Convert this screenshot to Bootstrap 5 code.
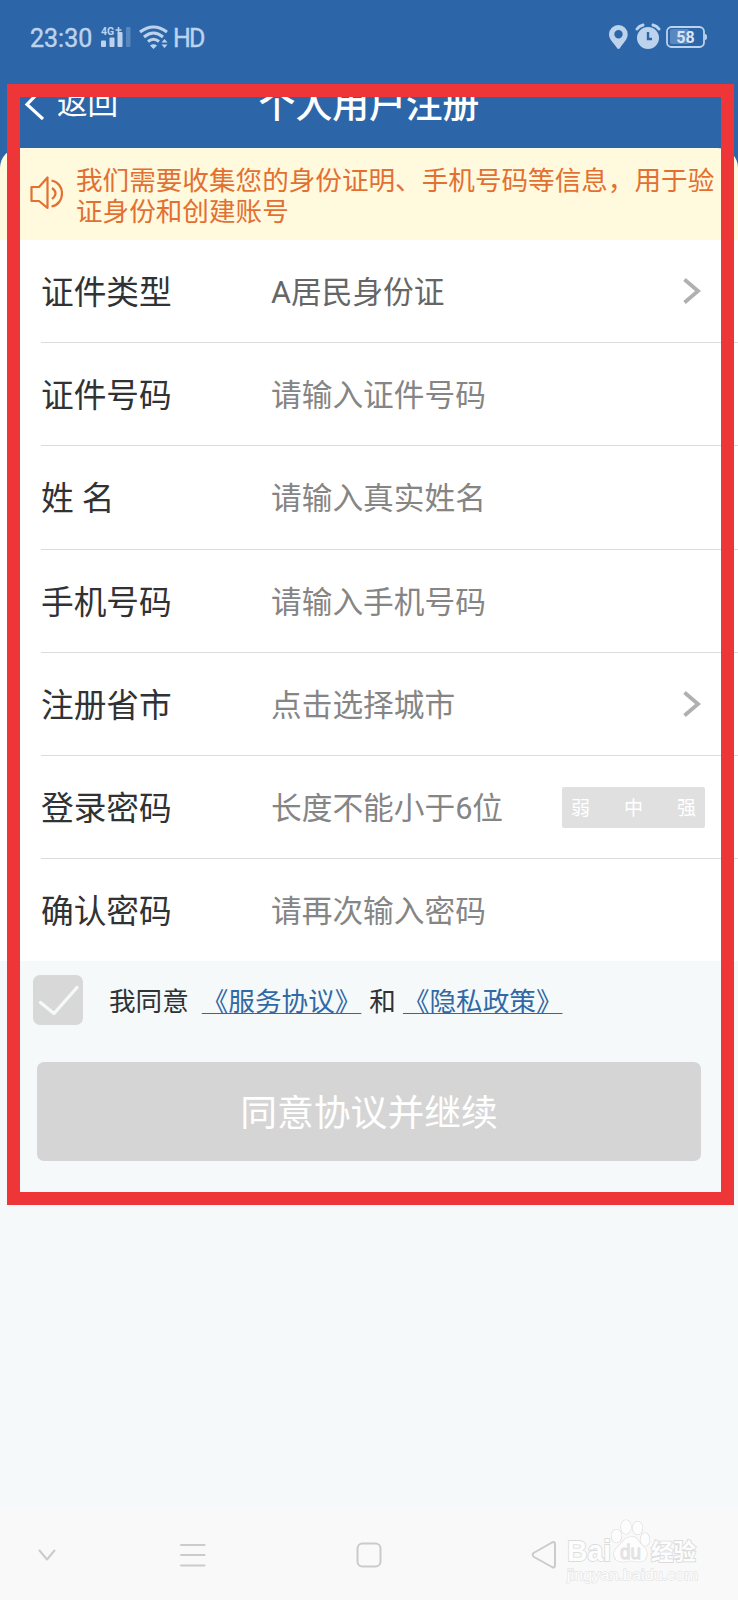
<!DOCTYPE html>
<html lang="zh-CN">
<head>
<meta charset="utf-8">
<meta name="viewport" content="width=device-width, initial-scale=1">
<title>个人用户注册</title>
<link href="https://cdn.jsdelivr.net/npm/bootstrap@5.3.0/dist/css/bootstrap.min.css" rel="stylesheet">
<style>
body{font-family:Roboto,"Noto Sans CJK SC",sans-serif;background:#f5f9fa;color:#303234;width:738px;height:1600px;overflow:hidden}
.screen{height:1600px}
.top-area{background:#2c66a9}
.status{height:74px;padding:0 30px 0 30px;color:#bdd3ed;font-size:25px;line-height:74px}
.status span{padding-top:3px}
.status-time{width:62px;-webkit-text-stroke:.4px #bdd3ed}
.status-signal{margin-left:8px}
.status-wifi{margin-left:7px}
.status-hd{margin-left:4px;-webkit-text-stroke:.4px #bdd3ed;letter-spacing:-1.8px}
.title-bar{height:74px;color:#fff}
.back-link{position:absolute;left:24px;top:7px;font-size:30.6px;line-height:46px;color:#fff}
.page-title{font-size:36.8px;line-height:56px;font-weight:500;padding-top:4px;margin:0}
.notice{height:92px;background:#fff9dd;border-radius:20px 20px 0 0;color:#e27033;font-size:26.6px;line-height:31.4px;padding:17px 0 0 30px;white-space:nowrap}
.notice-text{margin-left:13px}
.form-rows{height:721px;background:#fff;padding-left:41px}
.form-line{height:103.2px;border-bottom:1px solid #dcdcdc;padding-right:37px}
.form-line:last-child{border-bottom:0;height:101.8px}
.form-line label{width:230px;font-size:32.7px;padding-top:5px}
.form-line input{border:0;outline:0;background:none;padding:3px 0 0;width:286px;height:60px;font-size:30.7px;color:#666}
.form-line .filled-value{padding-top:0;margin-top:-3px}
.form-line input::placeholder{color:#858585;opacity:1}
.strength{width:143px;height:41px;background:#e0e0e0;border-radius:2px;color:#fff;font-size:19px;padding:4px 9px 0;margin-right:-4px}
.agree{height:101px;padding:14px 0 0 33px;font-size:26.6px}
.agree-box{width:50px;height:50px;border-radius:7px;background:#d8d8d8}
.agree-text{line-height:53px;margin-left:26px}
.agree-service{margin-left:13px}
.agree-and{margin-left:8px}
.agree-privacy{margin-left:7px}
.agree-text a{color:#3069a5;text-decoration:underline;text-decoration-thickness:1px;text-underline-offset:2px;text-decoration-skip-ink:none}
.go-btn{width:664px;height:99px;margin-left:37px;border:0;border-radius:7px;font-size:36.8px;line-height:99px}
.go-btn:disabled{background:#d5d5d5;color:#fff;opacity:1}
.go-btn span{display:block;padding-top:2px}
.highlight-frame{position:absolute;left:7px;top:84px;width:727px;height:1121px;border:13px solid #ee3638;pointer-events:none}
.sys-nav{height:91px;background:#f9f9f9}
.watermark{position:absolute;left:560px;top:1514px}
</style>
</head>
<body>
<main class="screen position-relative d-flex flex-column">
  <header class="top-area">
    <div class="status d-flex align-items-center">
      <span class="status-time">23:30</span>
      <svg class="status-signal" width="32" height="28" viewBox="0 0 32 28" fill="#bdd3ed"><text x="1" y="12" font-size="10.500" font-weight="700" font-family="Roboto">4G</text><path d="M18.500 4v7M15.500 7h6" stroke="#bdd3ed" stroke-width="1.600"/><rect x="1" y="17.500" width="5" height="6.500" rx="1"/><rect x="9.500" y="14.500" width="5" height="9.500" rx="1"/><rect x="17.500" y="9" width="5" height="15" rx="1"/><rect x="26" y="4" width="4.500" height="20" rx="1" opacity=".3"/></svg>
      <svg class="status-wifi" width="30" height="24" viewBox="0 0 30 24" fill="none" stroke="#bdd3ed" stroke-width="3"><path d="M1 7Q14.500-3 28 7M5 12Q14.500 4 24 12M9 16.500Q14.500 12 20 16.500"/><path d="M11 20.500Q14.500 18 18 20.500L14.500 24ZM22.500 17.500L25.500 14l3 3.500zM22.500 19.500L25.500 23l3-3.500z" fill="#bdd3ed" stroke="none"/></svg>
      <span class="status-hd">HD</span>
      <svg class="ms-auto" width="99" height="28" viewBox="0 0 99 28"><path fill-rule="evenodd" fill="#bdd3ed" d="M9.500 2A9.300 9.300 0 0 0 0 11.300C0 17 5 20 8 25q1.500 2 3 0C14 20 18.700 17 18.700 11.300A9.300 9.300 0 0 0 9.500 2Zm0 5a4.200 4.200 0 1 1 0 8.400a4.200 4.200 0 0 1 0-8.400Z"/><circle cx="39" cy="15" r="11" fill="#bdd3ed"/><path d="M39 9v7h4" fill="none" stroke="#2c66a9" stroke-width="2.400"/><path d="M28 6q2-3 6-4M50 6q-2-3-6-4" fill="none" stroke="#bdd3ed" stroke-width="3" stroke-linecap="round"/><rect x="61" y="6" width="19" height="15" rx="2" fill="#5988c1"/><rect x="58" y="4" width="37" height="20" rx="4.500" fill="none" stroke="#bdd3ed" stroke-width="1.800"/><path d="M96 11q2 0 2 3t-2 3z" fill="#bdd3ed"/><text x="76.500" y="19.700" font-family="Roboto" font-size="16" font-weight="700" fill="#d6e5f6" text-anchor="middle">58</text></svg>
    </div>
    <div class="title-bar position-relative text-center">
      <a class="back-link text-decoration-none d-flex align-items-center" href="#"><svg width="20" height="32" viewBox="0 0 20 32"><path d="M18 1L3 16.500L19 31" fill="none" stroke="#fff" stroke-width="3.200"/></svg><span style="margin-left:13px">返回</span></a>
      <h1 class="page-title">个人用户注册</h1>
    </div>
  </header>
  <div class="top-area"><div class="notice d-flex">
    <svg style="margin-top:10px" width="33" height="36" viewBox="0 0 33 36" fill="none" stroke="#e27033" stroke-width="2.200" stroke-linejoin="round"><path d="M1.500 12H9L17.500 2.500V33L9 26H1.500ZM22 13Q29 18 22 24M21.500 5.500C35.500 8 35.500 29 21.500 31.500"/></svg>
    <div class="notice-text">我们需要收集您的身份证明、手机号码等信息，用于验<br>证身份和创建账号</div>
  </div></div>
  <form class="form-rows">
    <div class="form-line d-flex align-items-center"><label>证件类型</label><input class="filled-value" value="A居民身份证"><svg class="ms-auto" width="18" height="28" viewBox="0 0 18 28"><path d="M1.500 2.500L15 14L1.500 25.500" fill="none" stroke="#b0b0b0" stroke-width="3.800"/></svg></div>
    <div class="form-line d-flex align-items-center"><label>证件号码</label><input placeholder="请输入证件号码"></div>
    <div class="form-line d-flex align-items-center"><label>姓 名</label><input placeholder="请输入真实姓名"></div>
    <div class="form-line d-flex align-items-center"><label>手机号码</label><input placeholder="请输入手机号码"></div>
    <div class="form-line d-flex align-items-center"><label>注册省市</label><input placeholder="点击选择城市"><svg class="ms-auto" width="18" height="28" viewBox="0 0 18 28"><path d="M1.500 2.500L15 14L1.500 25.500" fill="none" stroke="#b0b0b0" stroke-width="3.800"/></svg></div>
    <div class="form-line d-flex align-items-center"><label>登录密码</label><input placeholder="长度不能小于6位"><div class="strength ms-auto d-flex align-items-center justify-content-between"><span>弱</span><span>中</span><span>强</span></div></div>
    <div class="form-line d-flex align-items-center"><label>确认密码</label><input placeholder="请再次输入密码"></div>
  </form>
  <div class="agree d-flex align-items-start">
    <span class="agree-box"><svg class="d-block" width="50" height="50" viewBox="0 0 50 50"><path d="M7.500 27.500L21 38.500L44 12.500" fill="none" stroke="#f5f9fa" stroke-width="3.300" stroke-linecap="round" stroke-linejoin="round"/></svg></span>
    <span class="agree-text">我同意</span>
    <span class="agree-text agree-service"><a href="#">《服务协议》</a></span>
    <span class="agree-text agree-and">和</span>
    <span class="agree-text agree-privacy"><a href="#">《隐私政策》</a></span>
  </div>
  <button class="go-btn btn p-0" disabled><span>同意协议并继续</span></button>
  <nav class="sys-nav mt-auto d-flex align-items-center">
    <svg width="738" height="91" viewBox="0 0 738 91" fill="none" stroke="#cbcbcb" stroke-width="2" stroke-linecap="round" stroke-linejoin="round"><path d="M39.500 41.500L47 50.500L54.500 41.500M181 36H204.500M181 46H204.500M181 56.500H204.500"/><rect x="357.500" y="34.500" width="23" height="23" rx="5"/><path d="M533.500 44L552 33.500Q555 32 555 35V56Q555 59.500 552 58L534 48Q531.500 46 533.500 44Z"/></svg>
  </nav>
  <div class="highlight-frame"></div>
  <svg class="watermark" width="145" height="74" viewBox="0 0 145 74" fill="#fdfdfd" stroke="#dcdcdc" stroke-width="1.800" paint-order="stroke"><text x="7" y="47" font-family="Liberation Sans" font-weight="700" font-size="30" textLength="44" lengthAdjust="spacingAndGlyphs">Bai</text><g stroke-width="1.200"><ellipse cx="56.500" cy="22" rx="5" ry="6.500"/><ellipse cx="66" cy="13" rx="5" ry="7"/><ellipse cx="77.500" cy="14" rx="5" ry="6.500"/><ellipse cx="85" cy="25.500" rx="4.500" ry="6.500"/><path d="M71 23Q75 22 78 26C80 31 87 33 87 40Q86 49 77 47.500Q71 46 65 47.500Q54 49 54 40C54 34 60 32 63 27Q67 23 71 23Z"/></g><text x="60" y="45" font-family="Liberation Sans" font-size="20" fill="#e4e4e4" stroke="#d8d8d8" stroke-width=".8" textLength="21" lengthAdjust="spacingAndGlyphs">du</text><text x="91" y="46" font-family="Noto Sans CJK SC" font-weight="700" font-size="22.500">经验</text><text x="7" y="66" font-family="Liberation Sans" font-size="15" stroke="#e6e6e6" stroke-width="1.300" textLength="131" lengthAdjust="spacingAndGlyphs">jingyan.baidu.com</text></svg>
</main>
<script src="https://cdn.jsdelivr.net/npm/bootstrap@5.3.0/dist/js/bootstrap.bundle.min.js"></script>
</body>
</html>
